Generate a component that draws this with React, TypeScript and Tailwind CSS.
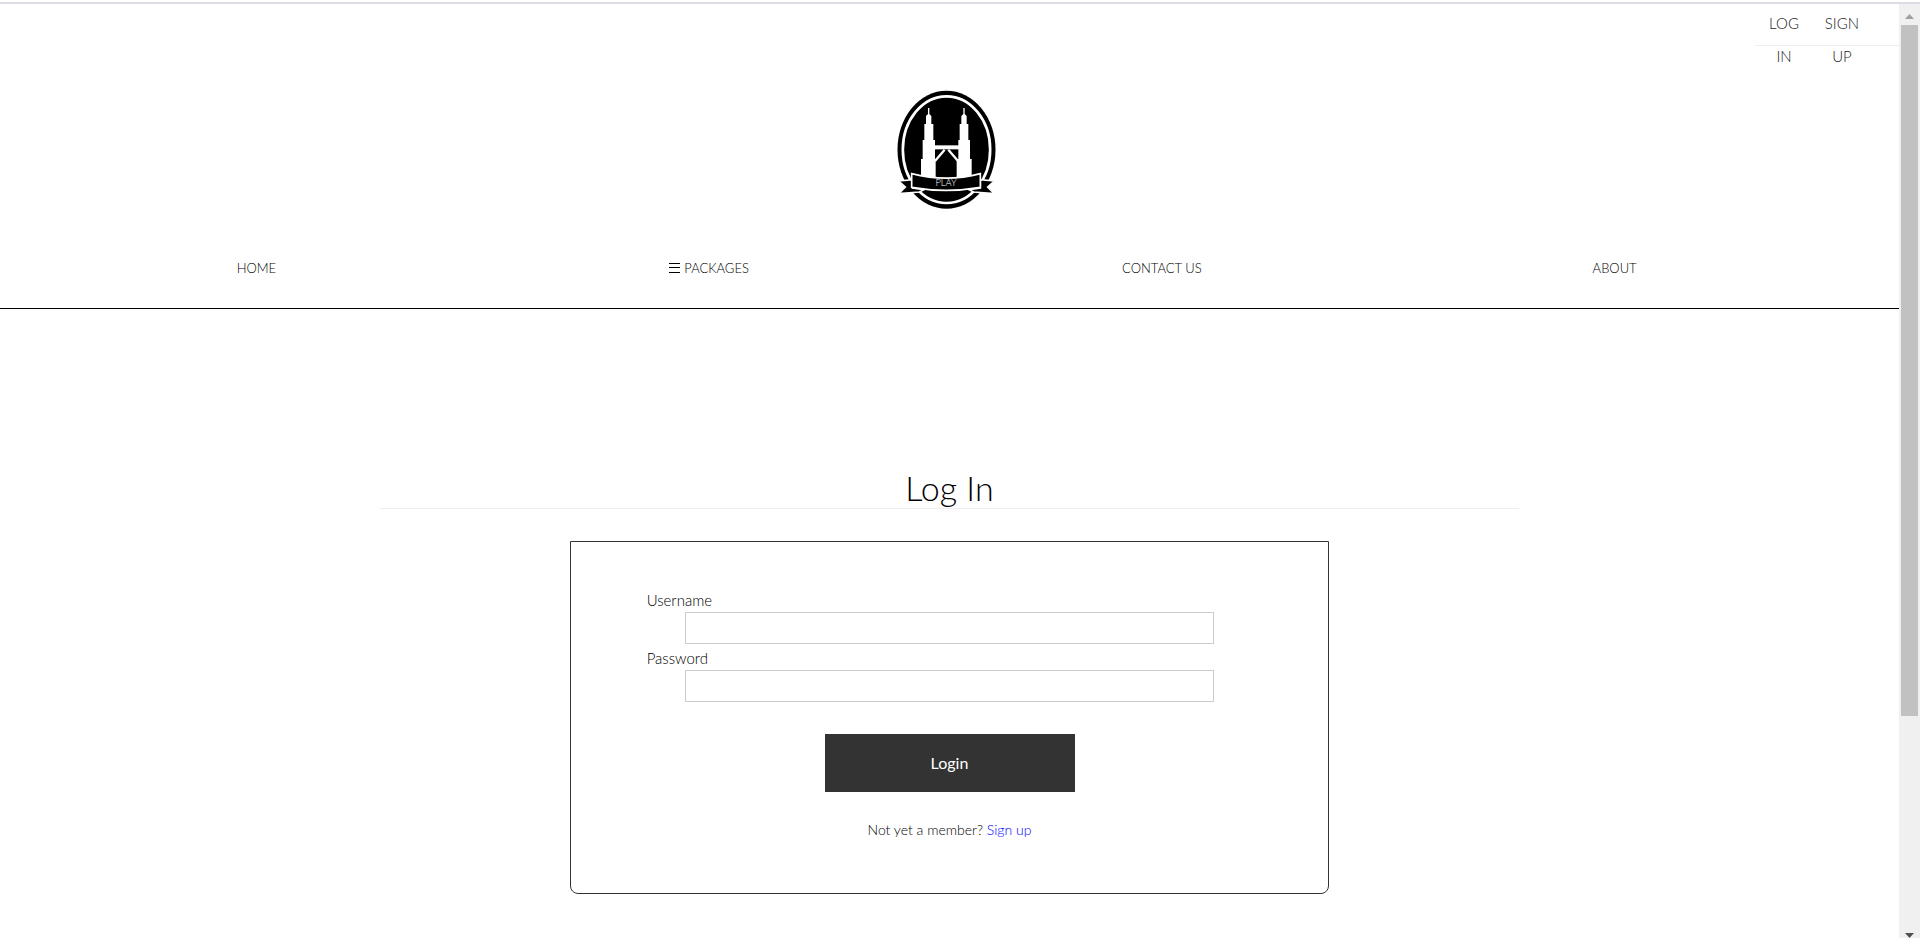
import React from "react";

const navItems = [
  { label: "HOME", href: "#home" },
  { label: "PACKAGES", href: "#packages", menu: true },
  { label: "CONTACT US", href: "#contact" },
  { label: "ABOUT", href: "#about" },
];

const fields = [
  { id: "username", label: "Username", type: "text" },
  { id: "password", label: "Password", type: "password" },
];

function Logo() {
  return (
    <svg viewBox="51 28 297 360" className="h-[120px] w-[99px]" role="img" aria-label="Play">
      <ellipse cx="199.500" cy="207" rx="147" ry="177" fill="#000" />
      <ellipse cx="199.500" cy="207" rx="131" ry="160" fill="none" stroke="#fff" strokeWidth="8" />
      <g fill="#fff">
        <path d="M144 82h4v18l6 6v24h6v48h5v57h2v55h-44v-55h5v-57h5v-48h5v-24l6-6z" />
        <path d="M250 82h4v18l6 6v24h5v48h5v57h5v55h-45v-55h5v-57h4v-48h5v-24l6-6z" />
        <path d="M162 194h76v12h-76z" />
      </g>
      <path fill="none" stroke="#fff" strokeWidth="7" d="M165 241l29-34M234 241l-29-34" />
      <g fill="#000" stroke="#fff" strokeWidth="5">
        <path d="M56 301l42-4v25l34 5-14 7-62 5 20-20z" />
        <path d="M343 301l-42-4v25l-34 5 14 7 62 5-20-20z" />
        <path d="M95 279q105 27 206 0v41q-103 18-206 0z" />
      </g>
      <text
        x="198"
        y="317"
        textAnchor="middle"
        fontFamily="Lato, sans-serif"
        fontSize="28"
        fontWeight="300"
        fill="#fff"
      >
        PLAY
      </text>
    </svg>
  );
}

function ScrollRail() {
  return (
    <div aria-hidden="true" className="flex w-[21px] shrink-0 flex-col bg-[#f0f0f0] px-0.5">
      <div className="flex h-[21px] items-center justify-center pt-1">
        <svg viewBox="0 0 9 5" className="h-[5px] w-[9px]">
          <path d="M0 5L4.500 0L9 5z" fill="#a0a0a0" />
        </svg>
      </div>
      <div className="h-[74%] bg-[#c1c1c1]" />
      <svg viewBox="0 0 9 5" className="mt-auto h-[5px] w-[9px] self-center">
        <path d="M0 0h9L4.500 5z" fill="#505050" />
      </svg>
    </div>
  );
}

export default function App() {
  return (
    <div className="flex h-screen flex-col bg-white font-['Lato',sans-serif] text-[15px] font-light text-black">
      <div className="mt-0.5 h-0.5 shrink-0 bg-[#dcdce4]" />
      <div className="flex min-h-0 flex-1">
        <div className="min-w-0 flex-1 overflow-hidden">
          <header className="border-b border-black">
            <div className="flex justify-end">
              <div className="grid w-36 grid-cols-[58px_58px] bg-[linear-gradient(#eeeeee,#eeeeee)] bg-[length:100%_1px] bg-[position:0_41px] bg-no-repeat pt-[3px] text-center leading-[33px] text-[#222]">
                <a href="#login">
                  LOG
                  <br />
                  IN
                </a>
                <a href="#signup">
                  SIGN
                  <br />
                  UP
                </a>
              </div>
            </div>
            <div className="mt-[17px] flex justify-center pr-1.5">
              <Logo />
            </div>
            <nav className="mt-[46px] mb-7 pr-[58px] pl-[30px]">
              <ul className="grid grid-cols-4 text-center text-[13px] leading-6">
                {navItems.map((item) => (
                  <li key={item.label}>
                    <a href={item.href} className="inline-flex items-center gap-1">
                      {item.menu && (
                        <svg
                          viewBox="0 0 11 10"
                          className="h-2.5 w-[11px]"
                          aria-hidden="true"
                        >
                          <path d="M0 0h11v1H0zM0 4h11v1H0zM0 9h11v1H0z" fill="#000" shapeRendering="crispEdges" />
                        </svg>
                      )}
                      {item.label}
                    </a>
                  </li>
                ))}
              </ul>
            </nav>
          </header>

          <main className="pt-[159px]">
            <h1 className="mx-auto w-3/5 border-b border-[#eee] text-center text-[34px] leading-10">Log In</h1>
            <form
              className="mx-auto mt-8 w-2/5 rounded-b-lg border border-[#333] px-[4%] pt-12 pb-[53px]"
              onSubmit={(event) => event.preventDefault()}
            >
              {fields.map((field) => (
                <div key={field.id} className="mb-1">
                  <label htmlFor={field.id} className="block pb-0.5 leading-5">
                    {field.label}
                  </label>
                  <input
                    id={field.id}
                    name={field.id}
                    type={field.type}
                    className="mx-auto block h-8 w-7/8 border border-[#ccc] px-2 outline-none"
                  />
                </div>
              ))}
              <button
                type="submit"
                className="mx-auto mt-8 block h-[58px] w-[250px] bg-[#333] text-[16px] font-normal text-white"
              >
                Login
              </button>
              <p className="mt-7 text-center text-[14px] leading-5">
                Not yet a member?{" "}
                <a href="#signup" className="text-[#0000ff]">
                  Sign up
                </a>
              </p>
            </form>
          </main>
        </div>
        <ScrollRail />
      </div>
    </div>
  );
}
